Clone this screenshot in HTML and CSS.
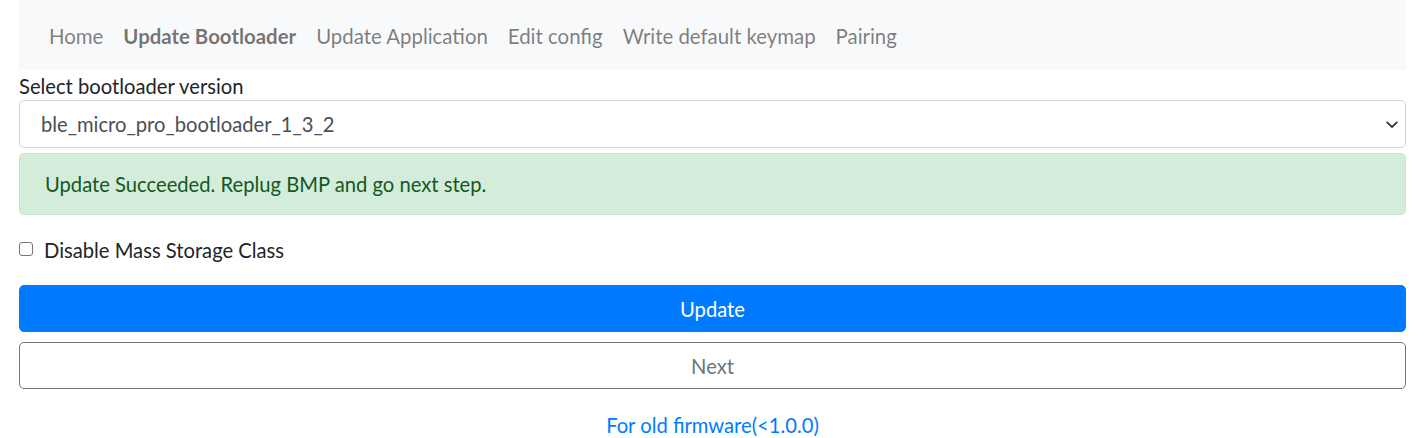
FILE: index.html
```html
<!DOCTYPE html>
<html lang="en">
<head>
<meta charset="utf-8">
<title>Update Bootloader</title>
<link rel="stylesheet" href="styles.css">
</head>
<body>
<div class="container">
  <nav class="navbar">
    <ul class="nav">
      <li><a class="nav-link" href="#">Home</a></li>
      <li><a class="nav-link active" href="#">Update Bootloader</a></li>
      <li><a class="nav-link" href="#">Update Application</a></li>
      <li><a class="nav-link" href="#">Edit config</a></li>
      <li><a class="nav-link" href="#">Write default keymap</a></li>
      <li><a class="nav-link" href="#">Pairing</a></li>
    </ul>
  </nav>
  <label class="field-label" for="ver">Select bootloader version</label>
  <div class="select-wrap">
    <select class="select" id="ver">
      <option>ble_micro_pro_bootloader_1_3_2</option>
    </select>
    <svg class="select-arrow" width="12" height="8" viewBox="0 0 12 8" aria-hidden="true"><path d="M1.2 1.4 L6 6 L10.8 1.4" fill="none" stroke="#3b3b3b" stroke-width="1.8" stroke-linecap="round" stroke-linejoin="round"/></svg>
  </div>
  <div class="alert">Update Succeeded. Replug BMP and go next step.</div>
  <div class="form-check">
    <input class="check" type="checkbox" id="msc">
    <label class="check-label" for="msc">Disable Mass Storage Class</label>
  </div>
  <button class="btn btn-primary" type="button">Update</button>
  <button class="btn btn-outline" type="button">Next</button>
  <div class="old-link"><a href="#">For old firmware(&lt;1.0.0)</a></div>
</div>
</body>
</html>
```
FILE: styles.css
```css
* { box-sizing: border-box; }
html, body { margin: 0; padding: 0; background: #fff; }
body {
  font-family: "Lato", "Open Sans", sans-serif;
  font-size: 20.2px;
  line-height: 30px;
  color: #212529;
}
.container {
  padding: 0 19px;
  display: flex;
  flex-direction: column;
}
.navbar {
  background: #f8f9fa;
  padding: 10px 20px;
}
.nav {
  list-style: none;
  margin: 0;
  padding: 0;
  display: flex;
}
.nav-link {
  display: block;
  padding: 11px 10px 9px;
  font-size: 20.4px;
  color: rgba(0,0,0,.5);
  text-decoration: none;
}
.nav-link.active {
  font-weight: 700;
  color: rgba(0,0,0,.55);
}
.field-label {
  display: block;
  padding-top: 1px;
  margin-bottom: -1px;
}
.select-wrap {
  position: relative;
}
.select {
  display: block;
  width: 100%;
  height: 48px;
  padding: 0 40px 0 21px;
  font: inherit;
  color: #495057;
  background: #fff;
  border: 1px solid #ced4da;
  border-radius: 5px;
  appearance: none;
  -webkit-appearance: none;
}
.select-arrow {
  position: absolute;
  right: 8px;
  top: 21px;
}
.alert {
  margin-top: 5px;
  padding: 15px 25px;
  height: 62px;
  background: #d4edda;
  border: 1px solid #c3e6cb;
  border-radius: 5px;
  color: #155724;
}
.form-check {
  margin-top: 20px;
  display: flex;
  align-items: flex-start;
}
.check {
  appearance: none;
  -webkit-appearance: none;
  width: 14px;
  height: 14px;
  margin: 7px 11px 0 0;
  border: 1px solid #767676;
  border-radius: 3px;
  background: #fff;
  flex: none;
}
.btn {
  display: block;
  width: 100%;
  height: 47px;
  font: inherit;
  line-height: 30px;
  padding: 7px 15px;
  border-radius: 5px;
  text-align: center;
  cursor: pointer;
}
.btn-primary {
  margin-top: 20px;
  background: #007bff;
  border: 1px solid #007bff;
  color: #fff;
}
.btn-outline {
  margin-top: 10px;
  background: #fff;
  border: 1px solid #6c757d;
  color: #6c757d;
}
.old-link {
  margin-top: 21px;
  text-align: center;
}
.old-link a {
  color: #007bff;
  text-decoration: none;
}
```
